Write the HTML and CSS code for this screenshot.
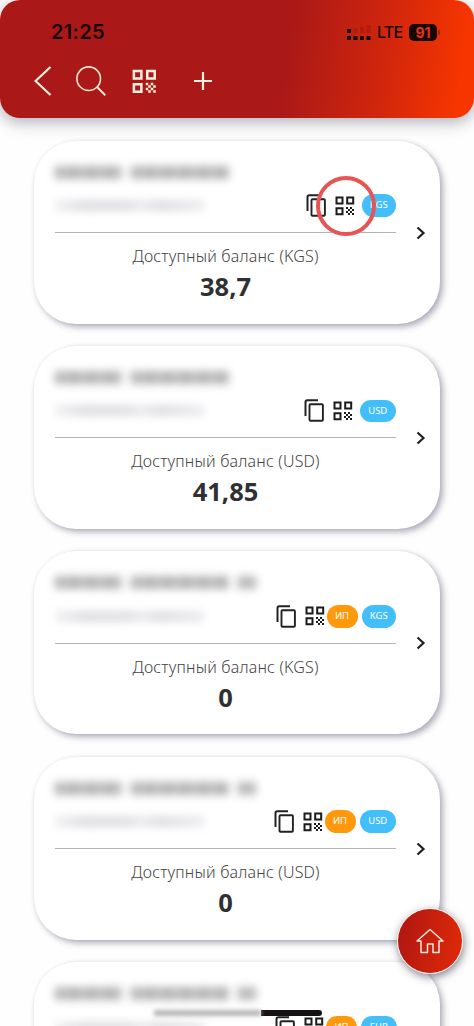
FILE: index.html
```html
<!DOCTYPE html>
<html lang="ru">
<head>
<meta charset="utf-8">
<title>Счета</title>
<link rel="stylesheet" href="styles.css">
</head>
<body>
<svg class="defs" aria-hidden="true">
  <symbol id="copy" viewBox="0 0 20 23"><path d="M1.5 17V3Q1.5 1.2 3.3 1.2H14" fill="none" stroke="currentColor" stroke-width="2"/><rect x="5.5" y="5.2" width="13.4" height="16.6" rx="1" fill="none" stroke="currentColor" stroke-width="1.9"/></symbol>
  <symbol id="qr" viewBox="0 0 20 20"><path d="M1.5 1.5h6v6h-6zM12.2 1.5h6v6h-6zM1.5 12.2h6v6h-6z" fill="none" stroke="currentColor" stroke-width="2"/><path d="M11 11h2v2h-2zM15 11h2v2h-2zM13 13h2v2h-2zM17 13h2v2h-2zM11 15h2v2h-2zM15 15h2v2h-2zM13 17h2v2h-2zM17 17h2v2h-2z" fill="currentColor"/></symbol>
  <symbol id="chevron" viewBox="0 0 10 14"><path d="M1.5 1.5L7.5 7L1.5 12.5" fill="none" stroke="currentColor" stroke-width="2.2"/></symbol>
</svg>
<div class="screen">
  <header class="header">
    <div class="status">
      <span class="time">21:25</span>
      <svg class="signal" viewBox="0 0 24 17"><path d="M0 5h4v4H0zM0 12h4v4H0zM6.5 12h4v4h-4zM13 12h4v4h-4zM19.5 12h4v4h-4z" fill="#160706"/><path d="M6.5 4h4v5h-4zM13 3h4v6h-4zM19.5 1h4v8h-4z" fill="#9e1710" opacity=".55"/></svg>
      <span class="network">LTE</span>
      <span class="battery">91</span><span class="nub"></span>
    </div>
    <nav class="toolbar">
      <svg class="back" viewBox="0 0 18 30"><path d="M16.5 1L1.5 15L16.5 29" fill="none" stroke="#fff2e0" stroke-width="2.2"/></svg>
      <svg class="search" viewBox="0 0 30 30"><circle cx="12.7" cy="12.7" r="11.8" fill="none" stroke="#ffe6d5" stroke-width="1.6"/><path d="M21 21L29.3 29.2" stroke="#ffe6d5" stroke-width="1.9"/></svg>
      <svg class="scan"><use href="#qr"/></svg>
      <svg class="plus" viewBox="0 0 18 18"><path d="M9 0V18M0 9H18" stroke="#fff2e0" stroke-width="2.2"/></svg>
    </nav>
  </header>
  <main class="list">
    <article class="card">
      <div class="body">
        <div class="owner"><i class="first"></i><i class="last"></i></div>
        <div class="row"><div class="number"></div><svg class="copy"><use href="#copy"/></svg><svg class="qr"><use href="#qr"/></svg><span class="pill kgs">KGS</span><span class="highlight"></span></div>
        <p class="label">Доступный баланс (KGS)</p><p class="amount">38,7</p>
      </div>
      <svg class="chevron"><use href="#chevron"/></svg>
    </article>
    <article class="card">
      <div class="body">
        <div class="owner"><i class="first"></i><i class="last"></i></div>
        <div class="row"><div class="number"></div><svg class="copy"><use href="#copy"/></svg><svg class="qr"><use href="#qr"/></svg><span class="pill usd">USD</span></div>
        <p class="label">Доступный баланс (USD)</p><p class="amount">41,85</p>
      </div>
      <svg class="chevron"><use href="#chevron"/></svg>
    </article>
    <article class="card business">
      <div class="body">
        <div class="owner"><i class="first"></i><i class="last"></i><i class="suffix"></i></div>
        <div class="row"><div class="number"></div><svg class="copy"><use href="#copy"/></svg><svg class="qr"><use href="#qr"/></svg><span class="pill type">ИП</span><span class="pill kgs">KGS</span></div>
        <p class="label">Доступный баланс (KGS)</p><p class="amount">0</p>
      </div>
      <svg class="chevron"><use href="#chevron"/></svg>
    </article>
    <article class="card business">
      <div class="body">
        <div class="owner"><i class="first"></i><i class="last"></i><i class="suffix"></i></div>
        <div class="row"><div class="number"></div><svg class="copy"><use href="#copy"/></svg><svg class="qr"><use href="#qr"/></svg><span class="pill type">ИП</span><span class="pill usd">USD</span></div>
        <p class="label">Доступный баланс (USD)</p><p class="amount">0</p>
      </div>
      <svg class="chevron"><use href="#chevron"/></svg>
    </article>
    <article class="card business">
      <div class="body">
        <div class="owner"><i class="first"></i><i class="last"></i><i class="suffix"></i></div>
        <div class="row"><div class="number"></div><svg class="copy"><use href="#copy"/></svg><svg class="qr"><use href="#qr"/></svg><span class="pill type">ИП</span><span class="pill eur">EUR</span></div>
      </div>
    </article>
  </main>
  <div class="indicator"><span class="faded"></span><span class="solid"></span></div>
  <div class="home"><svg viewBox="0 0 28 26"><path d="M1 13L14 1.5L27 13H23V24.5H17V16H11.5V24.5H5V13Z" fill="none" stroke="#ffe8dc" stroke-width="1.5" stroke-linejoin="round"/></svg></div>
</div>
</body>
</html>
```

FILE: styles.css
```css
* { box-sizing: border-box; }
body { margin: 0; background: #fefefe; font-family: "Noto Sans", "Open Sans", sans-serif; }
svg { display: block; flex: none; }
.defs { position: absolute; width: 0; height: 0; }
.screen { position: relative; width: 474px; height: 1026px; overflow: hidden; }

.header { height: 118px; padding: 20px 34px 0; border-radius: 20px; background: linear-gradient(98deg, #aa1917 0%, #aa1917 60%, #d0260d 80%, #f63500 96%); box-shadow: 0 4px 16px rgba(60, 60, 85, .42); }
.status { display: flex; align-items: center; height: 24px; color: #190606; }
.time { margin-left: 17px; width: 296px; font: 600 20px/24px Inter, sans-serif; letter-spacing: .3px; }
.signal { width: 24px; height: 17px; }
.network { width: 32px; margin-left: 6px; font: 500 16px/24px Inter, sans-serif; letter-spacing: -.8px; }
.battery { width: 28px; height: 17px; border-radius: 5px; background: #170706; color: #e2331a; font: 700 14px/17px Inter, sans-serif; text-align: center; }
.nub { width: 1.5px; height: 5px; margin-left: 1px; border-radius: 0 2px 2px 0; background: #a51f0d; }
.toolbar { display: flex; align-items: center; height: 30px; margin-top: 22px; }
.back { width: 18px; height: 30px; }
.search { width: 30px; height: 30px; margin-left: 24px; }
.scan { width: 25px; height: 25px; margin-left: 26px; color: #fff0df; }
.plus { width: 18px; height: 18px; margin-left: 37px; }

.list { display: flex; flex-direction: column; gap: 22.4px; margin: 22.5px 34px 0; }
.card { display: flex; flex: none; height: 183px; padding: 22px 14px 0 21px; border-radius: 42px; background: #fff; box-shadow: 3px 3px 6px rgba(78, 78, 108, .46), 0 0 3px rgba(80, 80, 100, .08); }
.body { width: 341.5px; }
.owner { display: flex; align-items: center; gap: 9px; height: 19px; filter: blur(4.5px); }
.owner i { height: 13px; background: repeating-linear-gradient(90deg, #b0b0b0 0 5px, #bebebe 5px 13px, #b4b4b4 13px 18px); }
.first { width: 67px; }
.last { width: 98px; }
.suffix { width: 18px; }
.row { position: relative; display: flex; align-items: center; height: 51.5px; padding-bottom: 2.5px; border-bottom: 1.5px solid #b5b5b8; }
.number { width: 149px; height: 11px; margin-right: auto; background: linear-gradient(90deg, #f0f0f2, #dedee2 20%, #e0e0e4 50%, #ebebed 58%, #dedee2 70%, #ebebee); filter: blur(4px); }
.copy { width: 20px; height: 23px; color: #222; }
.qr { width: 20px; height: 20px; margin: 0 6.5px 0 9px; color: #1b1b1b; }
.business .qr { margin-right: 2px; }
.pill { height: 22.5px; border-radius: 12px; color: #fff; font-size: 9.5px; line-height: 22.5px; text-align: center; }
.kgs { width: 34.5px; background: #42bffa; }
.eur { width: 35.5px; background: #42bffa; }
.usd { width: 36.5px; background: #42bffa; }
.type { width: 31px; margin-right: 4px; background: #ff980b; }
.highlight { position: absolute; left: 261px; top: -6px; width: 60px; height: 60px; border: 4px solid #e65454; border-radius: 50%; }
.label { margin: 11px 0 0; color: #444; font: 300 16px/24px "Noto Sans", sans-serif; letter-spacing: .18px; text-align: center; white-space: nowrap; }
.amount { margin: 2px 0 0; color: #303033; font: 700 25.5px/32px "Noto Sans", sans-serif; text-align: center; }
.chevron { width: 10px; height: 14px; margin: 63px 0 0 20px; color: #202020; }

.indicator { position: absolute; left: 154px; top: 1010px; display: flex; width: 168px; height: 6px; }
.faded { width: 107px; background: #b5b5b5; filter: blur(2px); }
.solid { width: 61px; background: #171112; border-radius: 0 3px 3px 0; }
.home { position: absolute; left: 397px; top: 908px; display: flex; align-items: center; justify-content: center; width: 66px; height: 66px; border: 1.5px solid #fff0e9; border-radius: 50%; background: linear-gradient(100deg, #b31811 10%, #dc2809 90%); box-shadow: 1px 3px 9px rgba(30, 30, 50, .55); }
.home svg { width: 28px; height: 26px; }
```
